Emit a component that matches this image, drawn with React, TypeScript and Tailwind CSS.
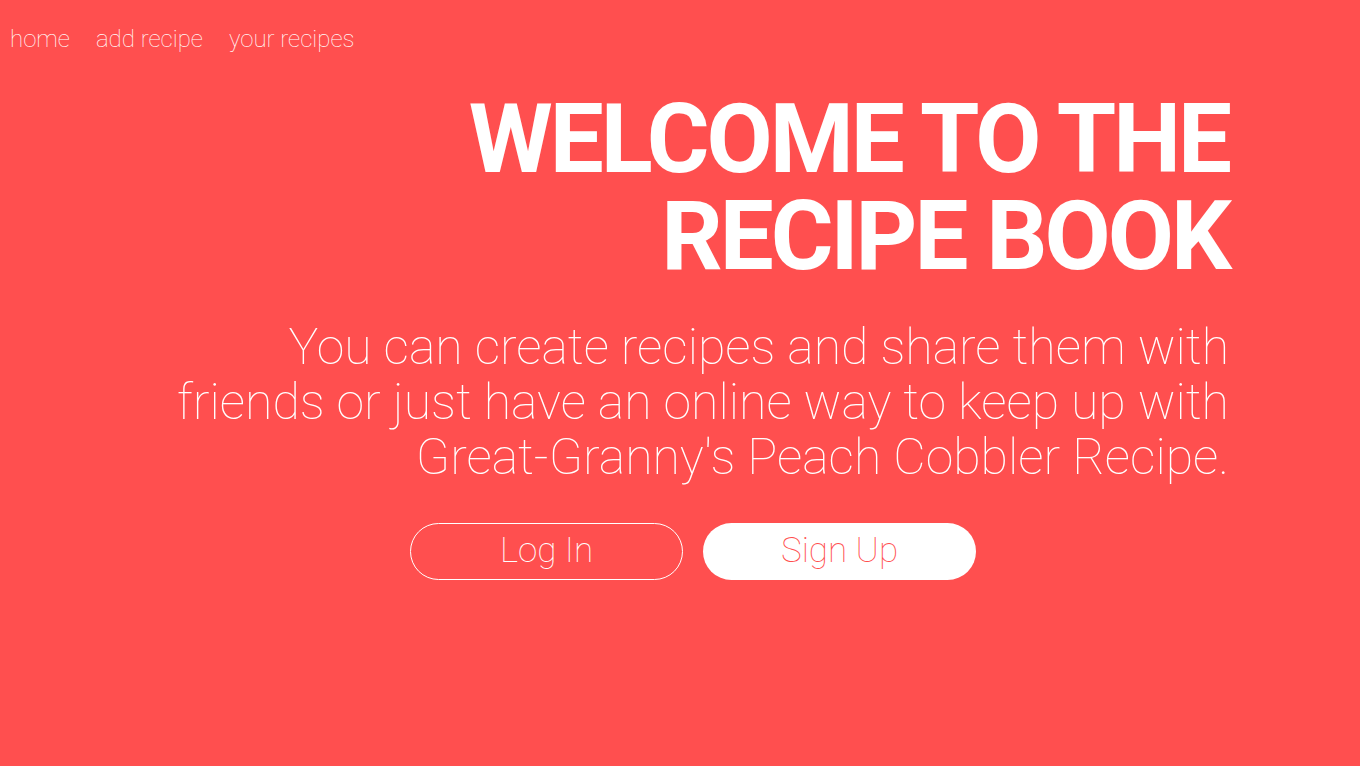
export default function App() {
  return (
    <div
      className="min-h-[766px] w-full bg-[#ff4f4f] text-white"
      style={{ fontFamily: "Roboto, 'Liberation Sans', sans-serif" }}
    >
      {/* nav */}
      <nav className="flex gap-[26px] pl-[10px] pt-[23px] text-[24px] font-thin leading-[32px]">
        <a href="#">home</a>
        <a href="#">add recipe</a>
        <a href="#">your recipes</a>
      </nav>

      {/* hero */}
      <div className="ml-[157px] w-[1072px] pt-[36px]">
        <h1 className="text-right text-[96px] font-bold leading-[97px] tracking-[-3px]">
          WELCOME TO THE
          <br />
          RECIPE BOOK
        </h1>
        <p className="ml-auto mt-[35px] max-w-[1062px] text-right text-[50px] font-thin leading-[55px]">
          You can create recipes and share them with friends or just have an online way to keep up with
          Great-Granny's Peach Cobbler Recipe.
        </p>
        <div className="mt-[38px] flex justify-center gap-[20px]">
          <button className="h-[57px] w-[273px] rounded-full border border-white text-[35px] font-thin">
            Log In
          </button>
          <button className="h-[57px] w-[273px] rounded-full bg-white text-[35px] font-thin text-[#ff4f4f]">
            Sign Up
          </button>
        </div>
      </div>
    </div>
  );
}
